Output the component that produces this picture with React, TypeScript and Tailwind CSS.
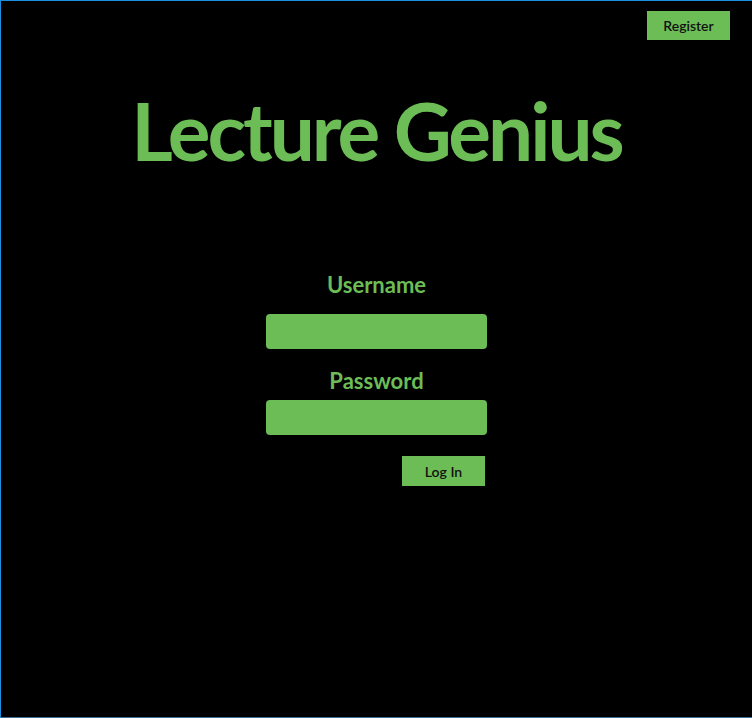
import React from "react";

export default function App() {
  return (
    <div className="w-[752px] h-[718px] bg-black border-l border-t border-b border-l-[#1a8fe0] border-t-[#1a8fe0] border-b-[#3b6f93] flex flex-col items-center" style={{ fontFamily: "Lato, 'Open Sans', sans-serif" }}>
      <div className="w-full flex justify-end pr-[22px] pt-[10px]">
        <button className="w-[83px] h-[29px] bg-[#6cbd56] text-[#111] text-[14px] font-semibold flex items-center justify-center">Register</button>
      </div>
      <h1 className="mt-[40px] text-[#6cbd56] text-[80px] font-bold leading-[100px] tracking-[-3px]">Lecture Genius</h1>
      <div className="mt-[90px] flex flex-col items-center">
        <label className="text-[#6cbd56] text-[22px] font-bold leading-[30px]">Username</label>
        <input className="mt-[14px] w-[221px] h-[35px] bg-[#6cbd56] rounded-[4px] outline-none" />
        <label className="mt-[17px] text-[#6cbd56] text-[22px] font-bold leading-[30px]">Password</label>
        <input className="mt-[4px] w-[221px] h-[35px] bg-[#6cbd56] rounded-[4px] outline-none" />
        <div className="w-[221px] flex justify-end mt-[21px] pr-[2px]">
          <button className="w-[83px] h-[30px] bg-[#6cbd56] text-[#111] text-[14px] font-semibold flex items-center justify-center">Log In</button>
        </div>
      </div>
    </div>
  );
}
